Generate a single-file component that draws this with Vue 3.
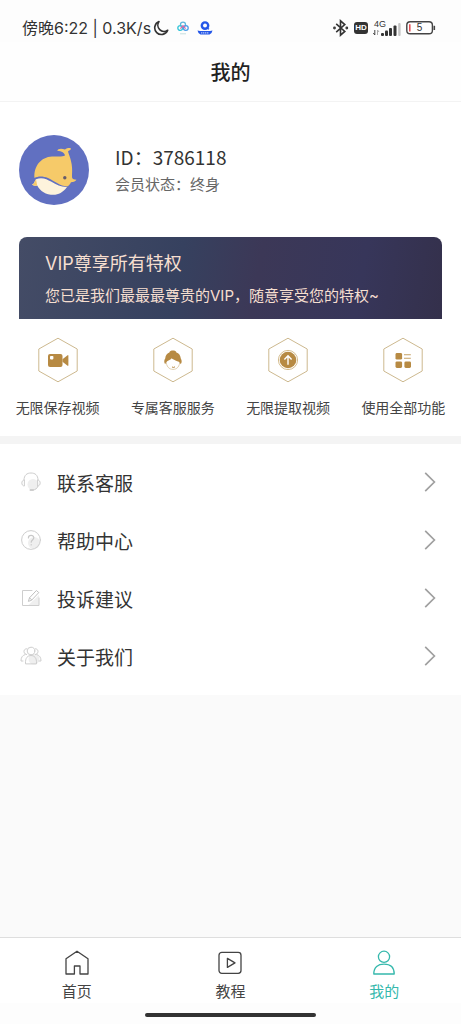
<script setup>
const perks = [
  { id: 'video', label: '无限保存视频' },
  { id: 'service', label: '专属客服服务' },
  { id: 'extract', label: '无限提取视频' },
  { id: 'all', label: '使用全部功能' },
]
const menu = [
  { id: 'contact', label: '联系客服' },
  { id: 'help', label: '帮助中心' },
  { id: 'feedback', label: '投诉建议' },
  { id: 'about', label: '关于我们' },
]
const tabs = [
  { id: 'home', label: '首页' },
  { id: 'guide', label: '教程' },
  { id: 'mine', label: '我的' },
]
const current = 'mine'
</script>

<template>
  <div class="page">
    <div class="status">
      <div class="status-left">
        <span>傍晚6:22 | 0.3K/s</span>
        <svg class="moon" width="16" height="16" viewBox="0 0 16 16" fill="none" stroke="#333" stroke-width="1.6" stroke-linejoin="round">
          <path d="M6 1.6A6.7 6.7 0 1 0 14.7 10.2A6.2 6.2 0 0 1 6 1.6Z" />
        </svg>
        <svg class="cloud" width="12" height="14" viewBox="0 0 12 14" fill="none" stroke-width="1.3">
          <circle cx="6" cy="3.6" r="2.5" stroke="#5fb6dc" />
          <circle cx="3.2" cy="7" r="2.4" stroke="#35c5d8" />
          <circle cx="8.8" cy="7" r="2.4" stroke="#4a9be8" />
          <path d="M3.4 7.6L6 4.8L8.6 7.6" stroke="#d66aa8" />
          <path d="M3 12.8H9" stroke="#c5dfdf" stroke-width="1" />
        </svg>
        <svg class="badge" width="16" height="14" viewBox="0 0 16 14">
          <circle cx="8" cy="4.6" r="3.2" fill="none" stroke="#2457e8" stroke-width="2.4" />
          <path d="M9.6 7L12 8.2" stroke="#2457e8" stroke-width="1.3" />
          <path d="M.5 9.4L3 10H13L15.5 9.4L14.5 12L12.5 13.6H3.5L1.5 12Z" fill="#2457e8" />
          <path d="M4 11.8H12" stroke="#b9c9f5" stroke-width="1.2" stroke-dasharray="1.4 .6" />
        </svg>
      </div>
      <div class="status-right">
        <svg width="16" height="18" viewBox="0 0 16 18" fill="none" stroke="#333" stroke-width="1.6">
          <path d="M3.2 4.8L11.8 12.4L7.5 16.2V1.8L11.8 5.6L3.2 13.2" />
          <circle cx="1.5" cy="9" r=".6" />
          <circle cx="13.8" cy="9" r=".6" />
        </svg>
        <span class="hd">HD</span>
        <svg class="signal" width="28" height="20" viewBox="0 0 28 20">
          <text x="1" y="9" font-size="9" fill="#333">4G</text>
          <path d="M1.8 12V17M.3 15L1.8 17" fill="none" stroke="#444" stroke-width="1" />
          <path d="M4.5 12V17M4.5 12L6 14" fill="none" stroke="#aaa" stroke-width="1" />
          <g fill="#333">
            <rect x="8" y="15" width="3" height="3" rx="1" />
            <rect x="12" y="12.6" width="3" height="5.4" rx="1" />
            <rect x="16" y="10" width="3" height="8" rx="1" />
            <rect x="20.5" y="7.6" width="3" height="10.4" rx="1" />
          </g>
          <rect x="25.2" y="5" width="2.4" height="13" rx="1" fill="#c4c4c4" />
        </svg>
        <svg class="battery" width="30" height="14" viewBox="0 0 30 14">
          <rect x=".8" y=".8" width="25.6" height="12" rx="3.4" fill="#fff" stroke="#444" stroke-width="1.4" />
          <path d="M28.3 4.8V9" stroke="#444" stroke-width="1.6" />
          <path d="M3.8 3.2V10.4" stroke="#e5484d" stroke-width="1.5" />
          <text x="13.5" y="10.4" font-size="10" text-anchor="middle" fill="#333">5</text>
        </svg>
      </div>
    </div>

    <header class="header"><h1>我的</h1></header>

    <main class="main">
      <section class="card">
        <div class="profile">
          <svg class="avatar" viewBox="0 0 70 70" role="img" aria-label="头像">
            <circle cx="35" cy="35" r="35" fill="#6170c1" />
            <path d="M15.5 43C14.5 31 22 22 33 21.4C38 21.3 42.5 22.3 46 20.6C45.5 17.5 43 16.3 38.2 15.7C38.8 13.6 42 13 46 14.4C48.5 12.4 52 12.6 52 13.8C52 15 49.8 15.6 49 16.6C51 23 54 29 53 40C53 42.5 52.5 44.4 57.5 44.8C56 47 54 47.2 52 47.2C51 49.6 49.5 51 48 51.4C41 51.2 36 46.2 29 43C24 41 19 41 15.5 43Z" fill="#f6ca69" />
            <path d="M13 49.6C15.5 48.8 15.5 46 17 44.2C23 41.8 28 44.2 32 46.6C38 50.2 42 52.2 48 52C44 57.4 39.5 59.8 34.5 59.8C27 59.8 21 56 18.2 50.4C16 50.8 14 50.8 13 49.6Z" fill="#fdf3dc" />
            <path d="M13 49.6C15.5 48.8 15.5 46 17 44.2L18.2 50.4C16 50.8 14 50.8 13 49.6Z" fill="#f6ca69" />
            <circle cx="45.8" cy="42.8" r="1.7" fill="#665c6b" />
          </svg>
          <div class="identity">
            <p class="uid">ID：3786118</p>
            <p class="state">会员状态：终身</p>
          </div>
        </div>

        <div class="banner">
          <h2>VIP尊享所有特权</h2>
          <p>您已是我们最最最尊贵的VIP，随意享受您的特权~</p>
        </div>

        <ul class="perks">
          <li v-for="p in perks" :key="p.id">
            <svg width="42" height="46" viewBox="0 0 42 46">
              <path d="M21 1.2L40.2 12V34L21 44.8L1.8 34V12Z" fill="none" stroke="#cdb98f" stroke-width="1" stroke-linejoin="round" />
              <g v-if="p.id === 'video'" fill="#b78a43">
                <rect x="11" y="17" width="14.5" height="13" rx="2" />
                <path d="M25.5 22.2L30.6 18.2Q31.4 17.8 31.4 19V28Q31.4 29.2 30.6 28.8L25.5 24.8Z" />
                <rect x="13" y="19" width="3.4" height="3.4" rx=".8" fill="#fff" />
              </g>
              <g v-else-if="p.id === 'service'">
                <path d="M14.2 24C14.2 29.4 17 32.4 21 32.4C25 32.4 27.8 29.4 27.8 24L20 20Z" fill="#fff" stroke="#d8c39b" stroke-width=".8" />
                <path d="M13.3 27.2C11.8 25.6 12 22.8 13.2 21.4C13.4 18.2 15.4 16 17.4 15.4C17.8 12.8 24 12.8 24.4 15.4C26.8 16 28.6 18.4 28.8 21.4C30 23 30 25.8 28.7 27.2C28 24.8 26 24.4 23.5 23.4C21.5 22.6 20.2 21.8 19.6 21.2C18.6 23.2 14.6 23 13.3 27.2Z" fill="#b78a43" />
                <path d="M20 30Q21.8 31 23 29.8" fill="none" stroke="#b78a43" stroke-width="1" />
              </g>
              <g v-else-if="p.id === 'extract'">
                <circle cx="21" cy="23" r="9.6" fill="#fff" stroke="#cfb37f" stroke-width=".9" />
                <circle cx="21" cy="23" r="8.3" fill="#b78a43" />
                <path d="M21 27.8V19M17.4 22.4L21 18.8L24.6 22.4" fill="none" stroke="#fff" stroke-width="1.4" />
              </g>
              <g v-else fill="#b78a43">
                <rect x="13.5" y="16" width="6.6" height="6.6" rx="1.4" />
                <rect x="13.5" y="24.4" width="6.6" height="6.6" rx="1.4" />
                <rect x="22.4" y="24.4" width="6.6" height="6.6" rx="1.4" />
                <path d="M22 17.8H28.8M22 21.2H28.8" stroke="#c5a163" stroke-width="1.1" />
              </g>
            </svg>
            <span>{{ p.label }}</span>
          </li>
        </ul>
      </section>

      <nav class="menu" aria-label="服务">
        <a v-for="m in menu" :key="m.id" :href="'#' + m.id">
          <svg class="lead" width="22" height="22" viewBox="0 0 22 22" fill="none" stroke="#cecece" stroke-width="1" stroke-linecap="round" stroke-linejoin="round">
            <g v-if="m.id === 'contact'">
              <circle cx="13" cy="13.5" r="5.5" fill="#efefef" stroke="none" />
              <path d="M4 9C4 4 7 2 11 2S18 4 18 9M4 9C1 9 1 15 4 15ZM18 9C21 9 21 15 18 15ZM18 15Q17 19 12.5 19" />
              <path d="M10.5 19H13" stroke-width="2" />
            </g>
            <g v-else-if="m.id === 'help'">
              <circle cx="14" cy="14" r="6" fill="#efefef" stroke="none" />
              <circle cx="11" cy="11" r="9.4" />
              <path d="M8.4 9C8.4 5.6 13.8 5.6 13.8 8.8C13.8 11 11.2 11 11.2 13.2M11.2 15.6V15.9" stroke="#c8c8c8" stroke-width="1.2" />
            </g>
            <g v-else-if="m.id === 'feedback'">
              <path d="M19 10V18.5H8L19 8Z" fill="#efefef" stroke="none" />
              <path d="M12 3.5H2.5V18.5H19V11" />
              <path d="M8.5 14L9.5 10.8L16.4 3.5L18.8 5.6L11.8 13ZM9.5 10.8L11.8 13" stroke="#c0c0c0" />
            </g>
            <g v-else>
              <circle cx="14" cy="14" r="5.5" fill="#efefef" stroke="none" />
              <circle cx="11" cy="6" r="3.8" />
              <path d="M5.5 18.5C5 12.5 8 10.5 11 10.5S17 12.5 16.5 18.5ZM6.6 9.6C3 9 3 3.6 6.6 3.8M15.4 3.8C19 3.6 19 9 15.4 9.6M5.2 9.5C2.2 10.5 1 12.5 1 16H3M16.8 9.5C19.8 10.5 21 12.5 21 16H19" />
            </g>
          </svg>
          <span>{{ m.label }}</span>
          <svg class="arrow" width="12" height="20" viewBox="0 0 12 20" fill="none" stroke="#a0a0a0" stroke-width="1.7">
            <path d="M1.2 .8L10.4 10L1.2 19.2" />
          </svg>
        </a>
      </nav>
    </main>

    <nav class="tabs" aria-label="主导航">
      <button v-for="t in tabs" :key="t.id" type="button" :class="{ active: t.id === current }">
        <svg width="26" height="26" viewBox="0 0 26 26" fill="none" stroke="currentColor" stroke-width="1.3" stroke-linejoin="round">
          <path v-if="t.id === 'home'" d="M2 8.8L13 1.2L24 8.8V24H16V16H10.4V24H2Z" />
          <g v-else-if="t.id === 'guide'">
            <rect x="2" y="2.4" width="22" height="21" rx="2.8" />
            <path d="M10.4 8.4V17.4L18 12.9Z" />
          </g>
          <g v-else>
            <circle cx="13" cy="6.8" r="5.6" />
            <path d="M2.8 24C2.8 16.8 7 14.2 13 14.2S23.2 16.8 23.2 24Z" />
          </g>
        </svg>
        <span>{{ t.label }}</span>
      </button>
    </nav>
    <div class="gesture"><i></i></div>
  </div>
</template>

<style>
body {
  background: #fafafa;
}
</style>

<style scoped>
.page {
  min-height: 100vh;
  display: flex;
  flex-direction: column;
  background: #fafafa;
  color: #333;
  font-family: "Noto Sans CJK SC", "Noto Sans", sans-serif;
}
h1, h2, p, ul {
  margin: 0;
  padding: 0;
  font-weight: 400;
}
svg {
  display: block;
  flex: none;
}
.status {
  display: flex;
  justify-content: space-between;
  align-items: center;
  height: 42px;
  padding: 14px 25px 0 22px;
  box-sizing: border-box;
  background: #fdfdfd;
}
.status-left, .status-right {
  display: flex;
  align-items: center;
}
.status-left {
  font-family: Inter, "Noto Sans CJK SC", sans-serif;
  font-size: 16px;
  line-height: 24px;
}
.moon {
  margin-left: 2px;
}
.cloud, .badge {
  margin-left: 8px;
}
.status-right {
  gap: 5px;
  font-family: "Liberation Sans", sans-serif;
}
.hd {
  width: 14px;
  height: 12px;
  border-radius: 3px;
  background: #333;
  color: #fff;
  font-size: 8px;
  font-weight: 700;
  line-height: 12px;
  text-align: center;
}
.header {
  height: 60px;
  box-sizing: border-box;
  border-bottom: 1px solid #f3f3f3;
  background: #fefefe;
}
.header h1 {
  font-size: 20px;
  line-height: 60px;
  font-weight: 500;
  text-align: center;
  color: #222;
}
.main {
  flex: 1;
}
.card {
  padding: 33px 19px 18px;
  background: #fff;
  border-bottom: 8px solid #f4f4f4;
}
.profile {
  display: flex;
  align-items: center;
  gap: 26px;
}
.avatar {
  width: 70px;
  height: 70px;
}
.uid {
  font-size: 19px;
  line-height: 28px;
}
.state {
  font-size: 15px;
  line-height: 26px;
  color: #666;
}
.banner {
  margin-top: 32px;
  padding: 13px 26px 10px;
  border-radius: 8px 8px 0 0;
  background: linear-gradient(100deg, #444c66 0%, #36415f 38%, #3c3857 56%, #37365a 80%, #34304b 100%);
  color: #f6dfd0;
  font-family: Inter, "Noto Sans CJK SC", sans-serif;
}
.banner h2 {
  font-size: 18px;
  line-height: 28px;
}
.banner p {
  margin-top: 5px;
  font-size: 15px;
  line-height: 26px;
  white-space: nowrap;
}
.perks {
  display: grid;
  grid-template-columns: repeat(4, 1fr);
  margin: 18px -19px 0;
  list-style: none;
}
.perks li {
  display: flex;
  flex-direction: column;
  align-items: center;
  gap: 13px;
  font-size: 14px;
  line-height: 22px;
  white-space: nowrap;
  color: #444;
}
.menu {
  padding: 9px 25px 10px 20px;
  background: #fff;
}
.menu a {
  display: flex;
  align-items: center;
  height: 58px;
  color: #333;
  font-size: 19px;
  text-decoration: none;
}
.menu span {
  flex: 1;
  margin-left: 15px;
}
.tabs {
  display: grid;
  grid-template-columns: repeat(3, 1fr);
  height: 65px;
  border-top: 1px solid #dedede;
  background: #fff;
}
.tabs button {
  display: flex;
  flex-direction: column;
  align-items: center;
  gap: 4px;
  padding: 12px 0 0;
  border: 0;
  background: none;
  color: #444;
  font: 400 15px/22px "Noto Sans CJK SC", sans-serif;
}
.tabs .active {
  color: #35b8ac;
}
.gesture {
  display: flex;
  justify-content: center;
  padding: 10px 0 7px;
  background: #fdfdfd;
}
.gesture i {
  width: 37%;
  height: 4px;
  border-radius: 2px;
  background: #333;
}
</style>
